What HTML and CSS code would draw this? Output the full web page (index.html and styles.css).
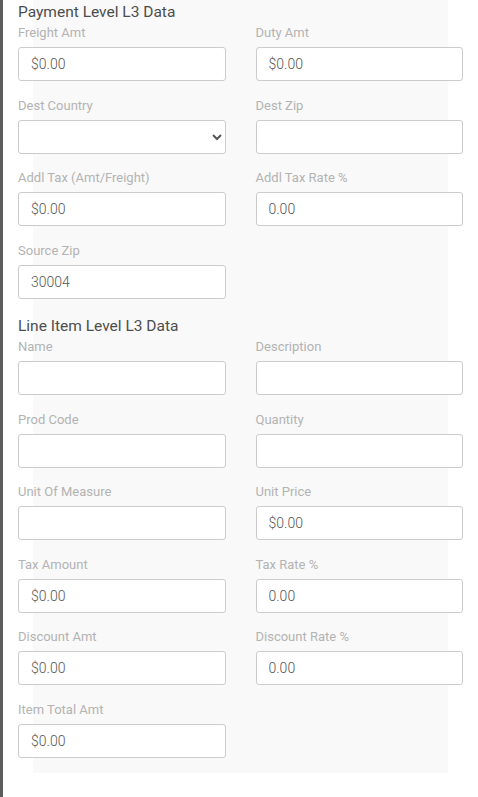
FILE: index.html
```html
<!DOCTYPE html>
<html>
<head>
<meta charset="utf-8">
<link rel="stylesheet" href="styles.css">
</head>
<body>
<div class="backdrop-edge"></div>
<div class="backdrop-panel"></div>
<form class="form">
  <h3 class="section-title">Payment Level L3 Data</h3>
  <div class="grid">
    <div class="field"><label>Freight Amt</label><input type="text" value="$0.00"></div>
    <div class="field"><label>Duty Amt</label><input type="text" value="$0.00"></div>
    <div class="field"><label>Dest Country</label><select><option></option></select></div>
    <div class="field"><label>Dest Zip</label><input type="text" value=""></div>
    <div class="field"><label>Addl Tax (Amt/Freight)</label><input type="text" value="$0.00"></div>
    <div class="field"><label>Addl Tax Rate %</label><input type="text" value="0.00"></div>
    <div class="field"><label>Source Zip</label><input type="text" value="30004"></div>
  </div>
  <h3 class="section-title second">Line Item Level L3 Data</h3>
  <div class="grid">
    <div class="field"><label>Name</label><input type="text" value=""></div>
    <div class="field"><label>Description</label><input type="text" value=""></div>
    <div class="field"><label>Prod Code</label><input type="text" value=""></div>
    <div class="field"><label>Quantity</label><input type="text" value=""></div>
    <div class="field"><label>Unit Of Measure</label><input type="text" value=""></div>
    <div class="field"><label>Unit Price</label><input type="text" value="$0.00"></div>
    <div class="field"><label>Tax Amount</label><input type="text" value="$0.00"></div>
    <div class="field"><label>Tax Rate %</label><input type="text" value="0.00"></div>
    <div class="field"><label>Discount Amt</label><input type="text" value="$0.00"></div>
    <div class="field"><label>Discount Rate %</label><input type="text" value="0.00"></div>
    <div class="field"><label>Item Total Amt</label><input type="text" value="$0.00"></div>
  </div>
</form>
</body>
</html>
```
FILE: styles.css
```css
html, body {
  margin: 0;
  padding: 0;
  background: #ffffff;
  font-family: Roboto, "Liberation Sans", Arial, sans-serif;
}
body {
  position: relative;
  width: 478px;
  height: 797px;
  overflow: hidden;
}
.backdrop-edge {
  position: absolute;
  left: 0;
  top: 0;
  width: 3px;
  height: 797px;
  background: #5c5c5c;
}
.backdrop-panel {
  position: absolute;
  left: 33px;
  top: 0;
  width: 415px;
  height: 773px;
  background: #f9f9f9;
}
.form {
  position: relative;
  padding: 0 15px 0 18px;
}
.section-title {
  margin: 0 0 3px 0;
  padding-top: 2px;
  font-size: 15.5px;
  line-height: 20px;
  font-weight: 400;
  color: #4d4d4d;
}
.section-title.second {
  padding-top: 0;
  margin-top: 1px;
}
.grid {
  display: grid;
  grid-template-columns: 1fr 1fr;
  column-gap: 30px;
}
.field {
  display: flex;
  flex-direction: column;
  padding-bottom: 16.5px;
}
.field label {
  font-size: 13px;
  line-height: 15px;
  color: #b3b3b3;
  margin-bottom: 7px;
}
.field input,
.field select {
  box-sizing: border-box;
  height: 34px;
  width: 100%;
  margin: 0;
  border: 1px solid #cccccc;
  border-radius: 3px;
  background: #ffffff;
  padding: 0 12px;
  font-family: Roboto, "Liberation Sans", Arial, sans-serif;
  font-size: 14px;
  font-weight: 300;
  color: #555555;
  outline: none;
}
.field select {
  padding: 0 4px;
}
```
